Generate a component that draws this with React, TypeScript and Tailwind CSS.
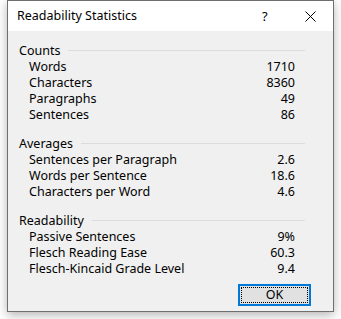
import React from "react";

const font = { fontFamily: '"Noto Sans", "Open Sans", sans-serif' };

function Header({ title }: { title: string }) {
  return (
    <div className="flex items-center h-[16px] pl-[11px] pr-[28px]">
      <span className="text-[12.5px] leading-[16px] text-black">{title}</span>
      <div className="flex-1 h-px bg-[#dcdcdc] ml-[8px] mt-[-1px]" />
    </div>
  );
}

function Row({ label, value }: { label: string; value: string }) {
  return (
    <div className="flex items-center h-[16px] pl-[21px] pr-[38px]">
      <span className="flex-1 text-[12.5px] leading-[16px] text-black">{label}</span>
      <span className="text-[12.5px] leading-[16px] text-black">{value}</span>
    </div>
  );
}

export default function App() {
  return (
    <div className="w-[341px] h-[319px] bg-white pl-[7px]" style={font}>
      <div className="w-[327px] h-[312px] border border-[#6f6f6f] bg-[#f0f0f0] flex flex-col shadow-[0_3px_10px_rgba(0,0,0,0.3)]">
        <div className="h-[30px] bg-white flex items-center pl-[9px] relative">
          <span className="text-[12.5px] text-black leading-[16px]">Readability Statistics</span>
          <span className="absolute left-[254px] top-[7px] text-[13px] leading-[16px] text-black">?</span>
          <svg className="absolute left-[297px] top-[10px]" width="11" height="11" viewBox="0 0 11 11">
            <path d="M0.5 0.5 L10.5 10.5 M10.5 0.5 L0.5 10.5" stroke="#000" strokeWidth="1" />
          </svg>
        </div>
        <div className="flex flex-col pt-[12px]">
          <Header title="Counts" />
          <Row label="Words" value="1710" />
          <Row label="Characters" value="8360" />
          <Row label="Paragraphs" value="49" />
          <Row label="Sentences" value="86" />
          <div className="h-[13px]" />
          <Header title="Averages" />
          <Row label="Sentences per Paragraph" value="2.6" />
          <Row label="Words per Sentence" value="18.6" />
          <Row label="Characters per Word" value="4.6" />
          <div className="h-[13px]" />
          <Header title="Readability" />
          <Row label="Passive Sentences" value="9%" />
          <Row label="Flesch Reading Ease" value="60.3" />
          <Row label="Flesch-Kincaid Grade Level" value="9.4" />
          <div className="flex justify-end pr-[22px] pt-[7px]">
            <div className="w-[73px] h-[22px] border-2 border-[#0078d7] bg-[#e1e1e1] flex p-px">
              <div className="flex-1 border border-dotted border-black flex items-center justify-center">
                <span className="text-[12.5px] leading-[16px] text-black">OK</span>
              </div>
            </div>
          </div>
        </div>
      </div>
    </div>
  );
}
